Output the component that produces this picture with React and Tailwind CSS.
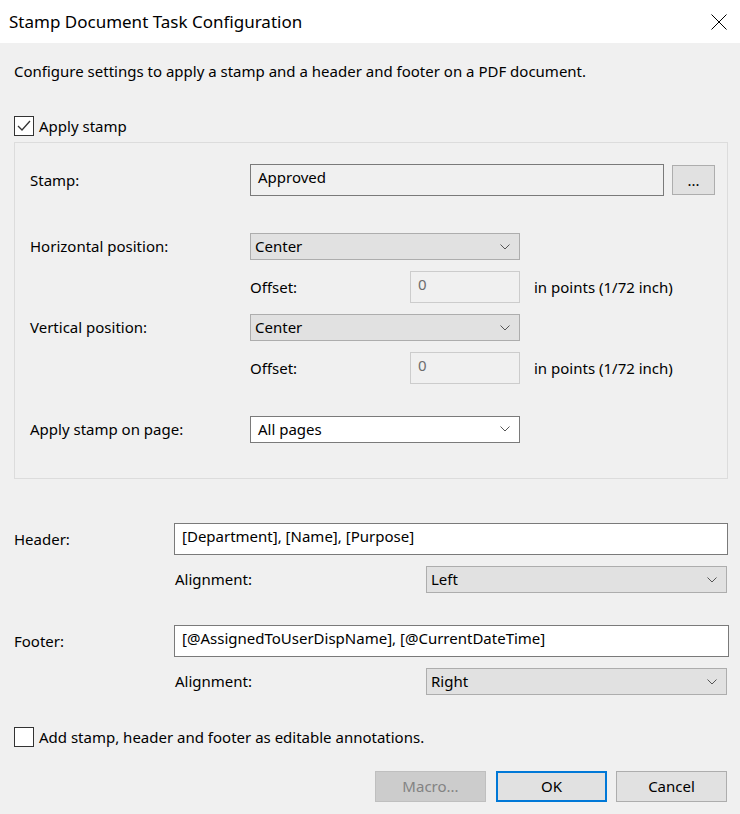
import React from "react";

const font = { fontFamily: '"Noto Sans", "Open Sans", sans-serif' };

const Chevron = () => (
  <svg width="10" height="6" viewBox="0 0 10 6" className="shrink-0">
    <path d="M0.5 0.5 L5 5 L9.5 0.5" fill="none" stroke="#555" strokeWidth="1" />
  </svg>
);

const Select = ({ value, width, white }) => (
  <div
    className={`flex h-[27px] shrink-0 items-center justify-between border pr-[9px] ${width} ${
      white ? "border-[#7a7a7a] bg-white pl-[7px]" : "border-[#adadad] bg-[#e1e1e1] pl-[4px]"
    }`}
  >
    <span>{value}</span>
    <Chevron />
  </div>
);

const OffsetRow = () => (
  <div className="mt-[11px] flex h-[32px] items-center pl-[220px]">
    <span className="w-[160px] shrink-0">Offset:</span>
    <div className="h-[32px] w-[110px] shrink-0 border border-[#cccccc] bg-[#f0f0f0] pl-[7px] pt-[2px] leading-[20px] text-[#6d6d6d]">
      0
    </div>
    <span className="ml-[14px] shrink-0">in points (1/72 inch)</span>
  </div>
);

const CheckBox = ({ checked }) => (
  <div className="flex h-[20px] w-[20px] items-center justify-center border border-[#333] bg-white">
    {checked && (
      <svg width="14" height="12" viewBox="0 0 14 12">
        <path d="M1 6 L5 10 L13 1" fill="none" stroke="#333" strokeWidth="1.3" />
      </svg>
    )}
  </div>
);

export default function App() {
  return (
    <div className="h-[814px] w-[740px] overflow-hidden bg-[#f0f0f0] text-[15px] text-black" style={font}>
      {/* title bar */}
      <div className="flex h-[43px] items-center justify-between bg-white pl-[9px] pr-[13px]">
        <span className="text-[17px]">Stamp Document Task Configuration</span>
        <svg width="16" height="16" viewBox="0 0 16 16">
          <path d="M0.5 0.5 L15.5 15.5 M15.5 0.5 L0.5 15.5" stroke="#000" strokeWidth="1" />
        </svg>
      </div>

      <div className="pl-[14px] pr-[12px]">
        <p className="mt-[18px] h-[20px] leading-[20px]">
          Configure settings to apply a stamp and a header and footer on a PDF document.
        </p>

        <div className="mt-[35px] flex h-[20px] items-center gap-[5px]">
          <CheckBox checked />
          <span>Apply stamp</span>
        </div>

        {/* stamp group */}
        <div className="mt-[6px] h-[337px] w-[714px] border border-[#dcdcdc] pl-[15px] pt-[21px]">
          <div className="flex h-[32px] items-center">
            <span className="w-[220px] shrink-0">Stamp:</span>
            <div className="h-[32px] w-[414px] shrink-0 border border-[#7a7a7a] bg-[#f0f0f0] pl-[7px] pt-[2px] leading-[20px]">
              Approved
            </div>
            <button className="ml-[8px] h-[30px] w-[43px] shrink-0 border border-[#adadad] bg-[#e1e1e1] leading-none">
              ...
            </button>
          </div>

          <div className="mt-[37px] flex h-[27px] items-center">
            <span className="w-[220px] shrink-0">Horizontal position:</span>
            <Select value="Center" width="w-[270px]" />
          </div>
          <OffsetRow />

          <div className="mt-[11px] flex h-[27px] items-center">
            <span className="w-[220px] shrink-0">Vertical position:</span>
            <Select value="Center" width="w-[270px]" />
          </div>
          <OffsetRow />

          <div className="mt-[32px] flex h-[26px] items-center">
            <span className="w-[220px] shrink-0">Apply stamp on page:</span>
            <Select value="All pages" width="w-[270px]" white />
          </div>
        </div>

        {/* header */}
        <div className="mt-[44px] flex h-[32px] items-center">
          <span className="w-[160px] shrink-0">Header:</span>
          <div className="h-[32px] w-[554px] shrink-0 border border-[#7a7a7a] bg-white pl-[7px] pt-[2px] leading-[20px]">
            [Department], [Name], [Purpose]
          </div>
        </div>
        <div className="mt-[11px] flex h-[27px] items-center pl-[161px]">
          <span className="w-[251px] shrink-0">Alignment:</span>
          <Select value="Left" width="w-[301px]" />
        </div>

        {/* footer */}
        <div className="mt-[32px] flex h-[32px] items-center">
          <span className="w-[160px] shrink-0">Footer:</span>
          <div className="h-[32px] w-[555px] shrink-0 border border-[#7a7a7a] bg-white pl-[7px] pt-[2px] leading-[20px]">
            [@AssignedToUserDispName], [@CurrentDateTime]
          </div>
        </div>
        <div className="mt-[11px] flex h-[27px] items-center pl-[161px]">
          <span className="w-[251px] shrink-0">Alignment:</span>
          <Select value="Right" width="w-[301px]" />
        </div>

        <div className="mt-[32px] flex h-[20px] items-center gap-[5px]">
          <CheckBox />
          <span>Add stamp, header and footer as editable annotations.</span>
        </div>

        {/* buttons */}
        <div className="mt-[24px] flex justify-end pr-[1px]">
          <button className="h-[31px] w-[111px] border border-[#bfbfbf] bg-[#cccccc] text-[#838383]">
            Macro...
          </button>
          <button className="ml-[10px] h-[31px] w-[111px] border-2 border-[#0078d7] bg-[#e1e1e1]">
            OK
          </button>
          <button className="ml-[9px] h-[31px] w-[111px] border border-[#adadad] bg-[#e1e1e1]">
            Cancel
          </button>
        </div>
      </div>
    </div>
  );
}
